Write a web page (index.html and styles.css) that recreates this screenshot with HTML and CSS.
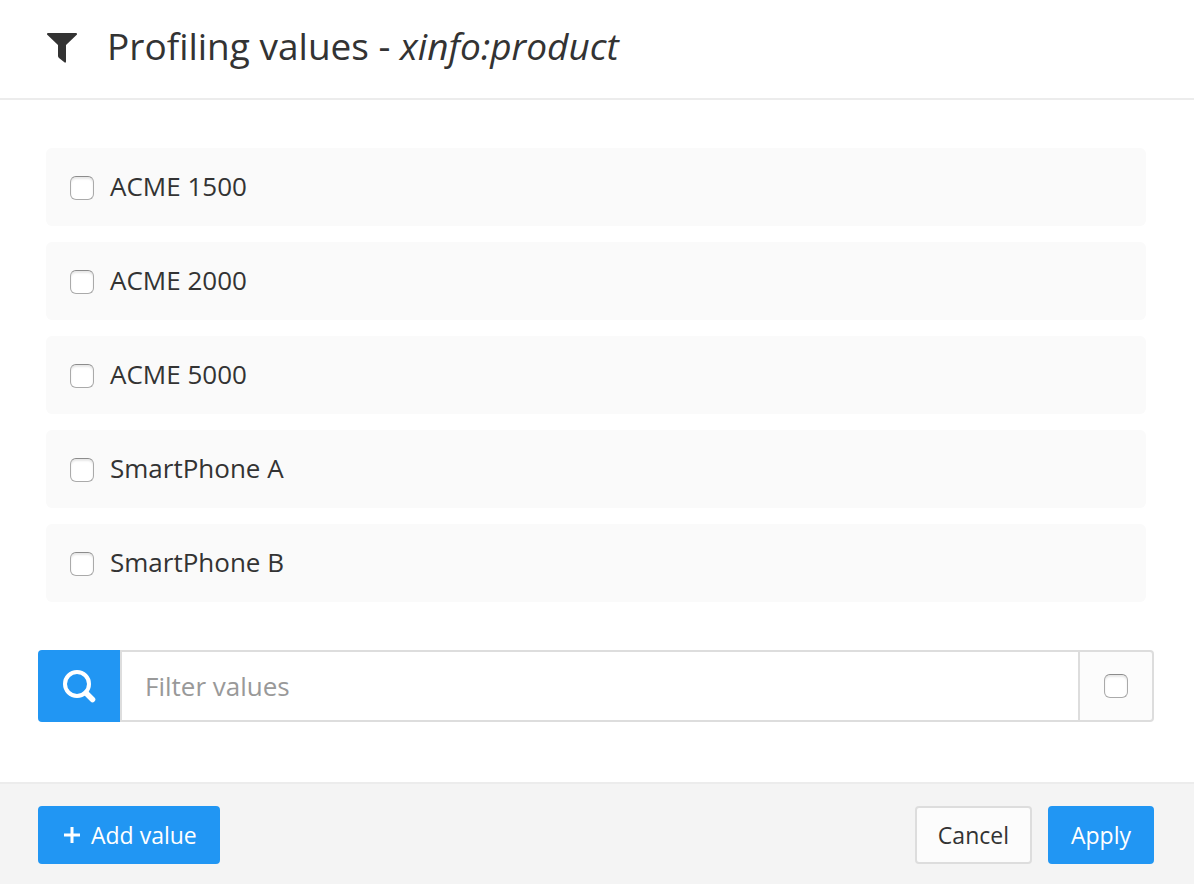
FILE: index.html
```html
<!DOCTYPE html>
<html lang="en">
<head>
    <meta charset="UTF-8">
    <meta name="viewport" content="width=device-width, initial-scale=1.0">
    <title>Profiling values</title>
    <link rel="stylesheet" href="styles.css">
</head>
<body>
    <header class="header">
        <svg class="filter-icon" viewBox="0 0 30 30" width="30" height="30" aria-hidden="true">
            <path d="M1 0h28q1 0 1 1v.5L19 12V28.500q0 1.500-1.300 1L12 25q-1-1-1-2V12L0 1.500V1q0-1 1-1z" fill="#333"/>
        </svg>
        <h1>Profiling values - <em>xinfo:product</em></h1>
    </header>

    <main class="content">
        <div class="values">
            <label class="value"><input type="checkbox" name="value"> <span>ACME 1500</span></label>
            <label class="value"><input type="checkbox" name="value"> <span>ACME 2000</span></label>
            <label class="value"><input type="checkbox" name="value"> <span>ACME 5000</span></label>
            <label class="value"><input type="checkbox" name="value"> <span>SmartPhone A</span></label>
            <label class="value"><input type="checkbox" name="value"> <span>SmartPhone B</span></label>
        </div>

        <div class="filter">
            <button type="button" class="search" aria-label="Search">
                <svg viewBox="0 0 34 34" width="34" height="34" aria-hidden="true">
                    <circle cx="15" cy="15" r="12" fill="none" stroke="#fff" stroke-width="4"/>
                    <path d="M24 24l6.500 6.500" stroke="#fff" stroke-width="5.500" stroke-linecap="round"/>
                </svg>
            </button>
            <input type="text" class="filter-input" placeholder="Filter values" aria-label="Filter values">
            <label class="select-all"><input type="checkbox" aria-label="Select all"></label>
        </div>
    </main>

    <footer class="footer">
        <button type="button" class="btn btn-primary btn-add">
            <svg viewBox="0 0 18 18" width="18" height="18" aria-hidden="true">
                <path d="M9 1v16M1 9h16" stroke="#fff" stroke-width="3"/>
            </svg>
            Add value
        </button>
        <button type="button" class="btn">Cancel</button>
        <button type="button" class="btn btn-primary">Apply</button>
    </footer>
</body>
</html>
```
FILE: styles.css
```css
* {
    box-sizing: border-box;
}

body {
    margin: 0;
    min-height: 100vh;
    display: flex;
    flex-direction: column;
    font-family: "Open Sans", sans-serif;
    font-size: 26px;
    color: #333;
    background: #fff;
}

button,
input {
    font-family: inherit;
}

.header {
    display: flex;
    align-items: center;
    gap: 30px;
    padding: 20px 47px 26px;
    border-bottom: 2px solid #ececec;
}

.filter-icon {
    margin-top: 4px;
}

h1 {
    margin: 0;
    font-size: 37px;
    font-weight: 400;
    line-height: 52px;
}

.content {
    flex: 1;
    padding: 48px 40px 60px 38px;
}

.values {
    display: flex;
    flex-direction: column;
    gap: 16px;
    padding: 0 8px;
    margin-bottom: 48px;
}

.value {
    display: flex;
    align-items: center;
    gap: 16px;
    padding: 20px 24px 22px;
    line-height: 36px;
    border-radius: 6px;
    background: #fafafa;
    cursor: pointer;
}

input[type="checkbox"] {
    appearance: none;
    flex: none;
    width: 24px;
    height: 24px;
    margin: 0;
    border: 1px solid #aaa;
    border-top-color: #8c8c8c;
    border-radius: 6px;
    background: #fff;
    box-shadow: inset 0 2px 2px #e8e8e8;
}

.value input[type="checkbox"] {
    margin-top: 4px;
}

input[type="checkbox"]:checked {
    background: #2196f3;
}

.filter {
    display: flex;
    height: 72px;
}

.search {
    display: flex;
    align-items: center;
    justify-content: center;
    width: 82px;
    padding: 0;
    border: none;
    border-radius: 4px 0 0 4px;
    background: #2196f3;
    cursor: pointer;
}

.filter-input {
    flex: 1;
    min-width: 0;
    padding: 0 23px;
    border: 2px solid #ddd;
    border-right: none;
    border-radius: 0;
    font-size: 26px;
    color: #333;
    outline: none;
}

.filter-input::placeholder {
    color: #999;
}

.select-all {
    display: flex;
    align-items: center;
    justify-content: center;
    width: 76px;
    border: 2px solid #ddd;
    border-radius: 0 4px 4px 0;
    background: #fcfcfc;
}

.footer {
    display: flex;
    gap: 16px;
    padding: 22px 40px 20px 38px;
    border-top: 2px solid #ececec;
    background: #f4f4f4;
}

.btn {
    display: flex;
    align-items: center;
    gap: 10px;
    height: 58px;
    padding: 0 21px;
    border: 2px solid #ddd;
    border-radius: 4px;
    font-size: 23px;
    color: #333;
    background: #fcfcfc;
    cursor: pointer;
}

.btn-primary {
    border-color: #2196f3;
    color: #fff;
    background: #2196f3;
}

.btn-add {
    margin-right: auto;
    padding-left: 23px;
}
```
